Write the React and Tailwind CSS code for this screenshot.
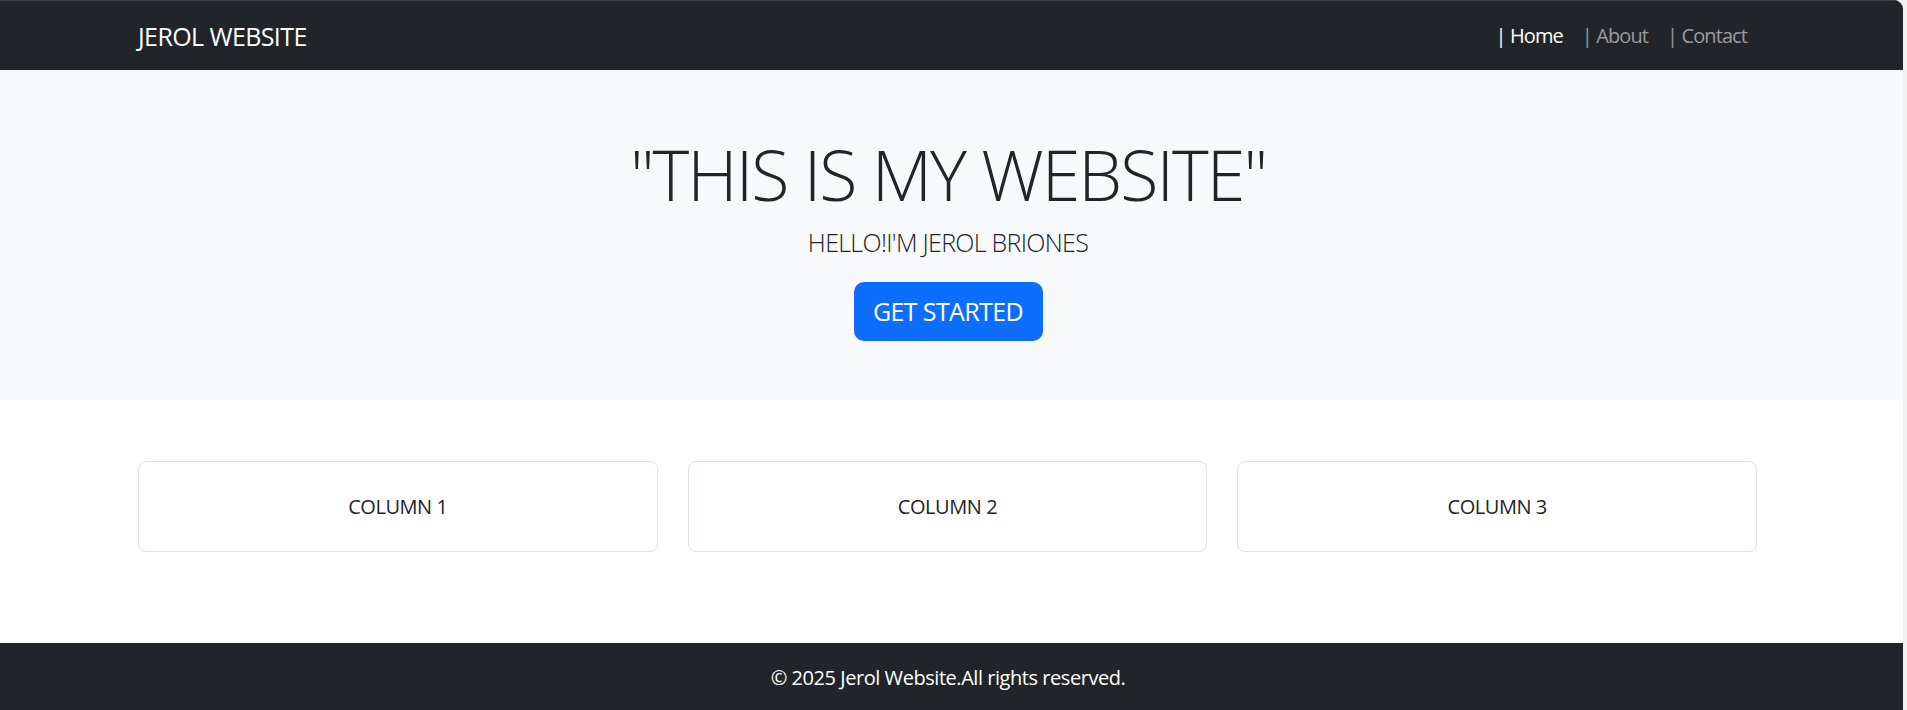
import React from 'react';

const navLinks = [
    { label: 'Home', active: true },
    { label: 'About', active: false },
    { label: 'Contact', active: false },
];

const columns = ['COLUMN 1', 'COLUMN 2', 'COLUMN 3'];

const App = () => {
    return (
        <div className="flex w-full min-h-[710px] bg-[#f1f1f1] tracking-[-0.45px]" style={{ fontFamily: '"Open Sans", "Noto Sans", sans-serif' }}>
            <div className="flex flex-col w-[1903px] bg-white rounded-tr-[9px] overflow-hidden">
                {/* navbar */}
                <nav className="h-[70px] bg-[#212529] border-t border-[#3b3e42] flex items-center">
                    <div className="w-[1619px] ml-[138px] flex items-center justify-between">
                        <a href="#" className="text-[25px] leading-[30px] text-white tracking-[-0.6px]">JEROL WEBSITE</a>
                        <ul className="flex items-center gap-[19px] pr-[10px]">
                            {navLinks.map(link => (
                                <li key={link.label}>
                                    <a href="#" className={`text-[20px] leading-[30px] tracking-[-0.9px] ${link.active ? 'text-white' : 'text-[#9b9c9e]'}`}>
                                        | {link.label}
                                    </a>
                                </li>
                            ))}
                        </ul>
                    </div>
                </nav>

                {/* hero */}
                <header className="h-[330px] bg-[#f8f9fa] flex flex-col items-center pt-[62px] pr-[7px] text-[#212529]">
                    <h1 className="text-[70px] leading-[84px] font-light tracking-[-2px]">"THIS IS MY WEBSITE"</h1>
                    <p className="mt-[8px] text-[25px] leading-[37.5px] font-light tracking-[-0.7px]">HELLO!I'M JEROL BRIONES</p>
                    <button className="mt-[20px] w-[189px] h-[59px] rounded-[10px] bg-[#0d6efd] text-white text-[25px] leading-[30px] tracking-[-0.6px]">
                        GET STARTED
                    </button>
                </header>

                {/* columns */}
                <section className="pt-[61px] pb-[91px]">
                    <div className="w-[1619px] ml-[138px] grid grid-cols-3 gap-[30px]">
                        {columns.map(col => (
                            <div key={col} className="h-[91px] bg-white border border-[#dee2e6] rounded-[8px] flex items-center justify-center">
                                <span className="text-[20px] text-[#212529]">{col}</span>
                            </div>
                        ))}
                    </div>
                </section>

                {/* footer */}
                <footer className="h-[70px] bg-[#212529] flex items-center justify-center pr-[7px]">
                    <p className="text-[20px] text-white">© 2025 Jerol Website.All rights reserved.</p>
                </footer>
            </div>
        </div>
    );
};

export default App;
